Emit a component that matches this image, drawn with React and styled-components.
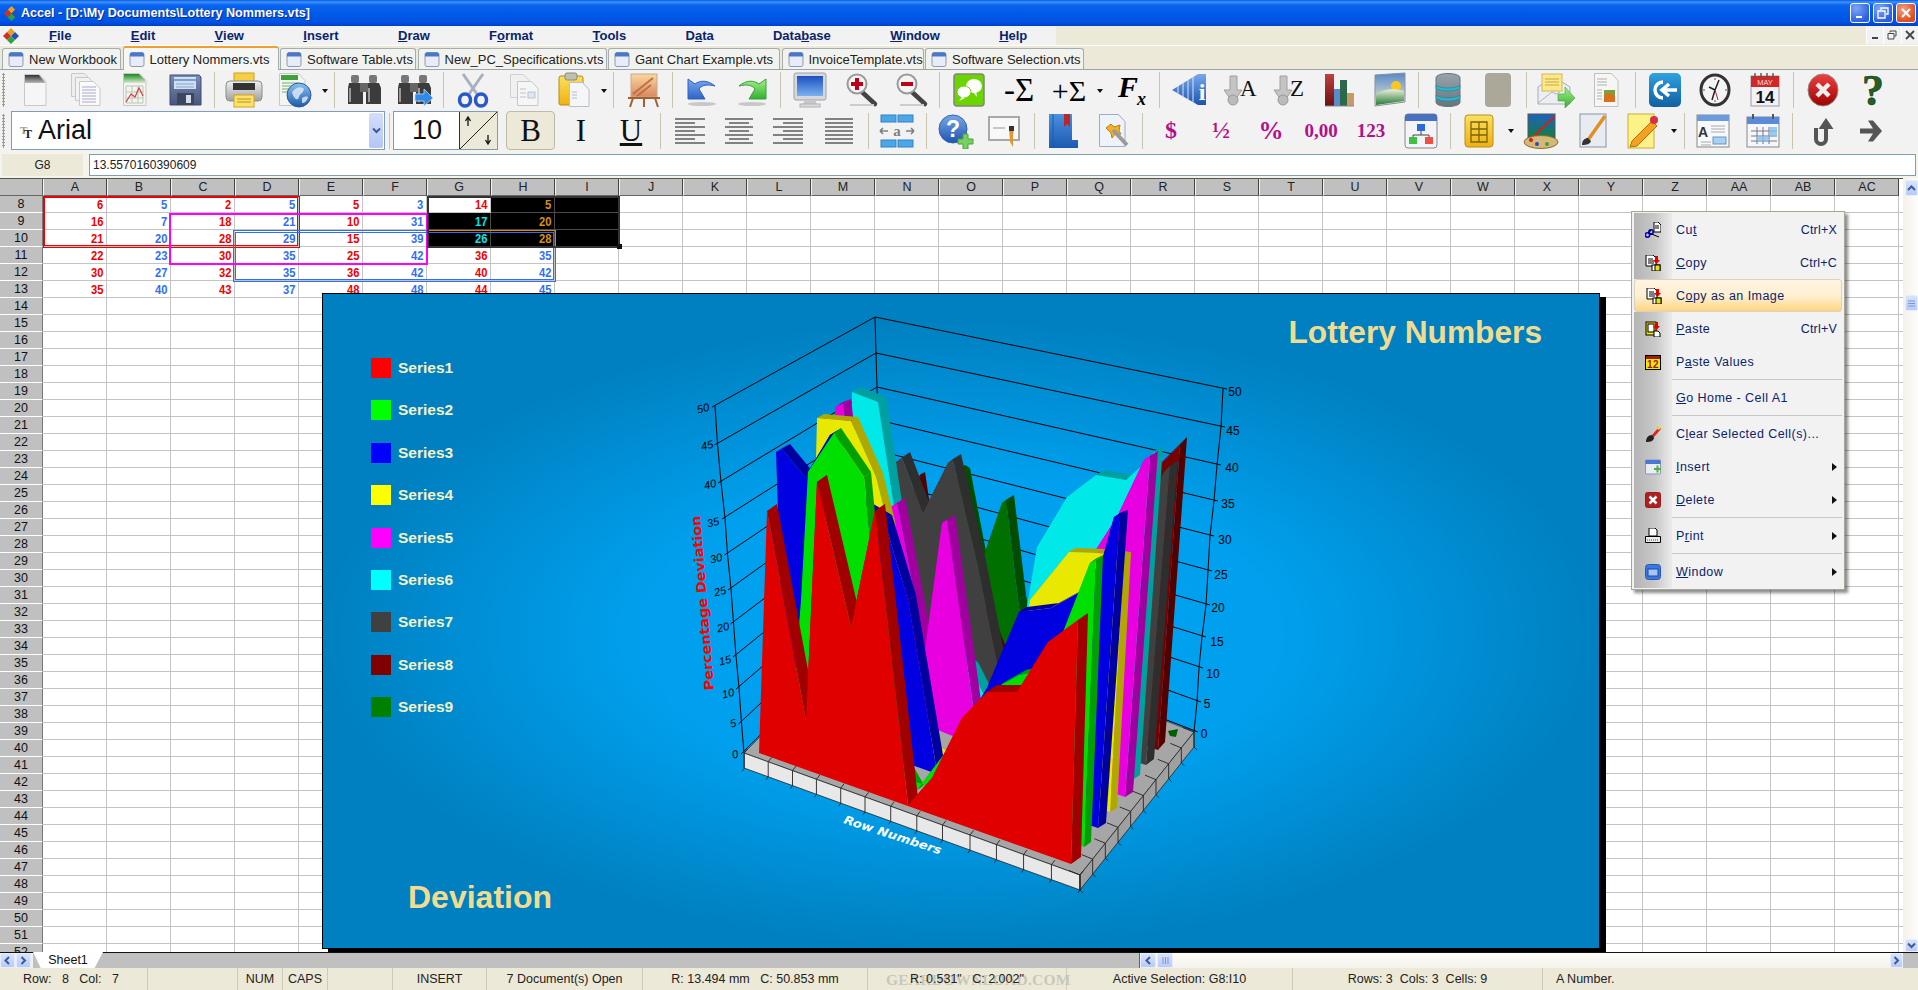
import React from 'react';
import styled, { createGlobalStyle } from 'styled-components';

const GlobalStyle = createGlobalStyle`
  html, body { margin: 0; padding: 0; overflow: hidden; background: #ece9d8; }
  body { font-family: "Liberation Sans", Arial, sans-serif; }
`;

const Win = styled.div`
  width: 1918px;
  height: 990px;
  display: flex;
  flex-direction: column;
  overflow: hidden;
`;

/* title bar */
const TitleBar = styled.div`
  height: 26px;
  flex: none;
  display: flex;
  align-items: center;
  padding: 0 2px 0 4px;
  background: linear-gradient(#0a5ae0 0, #3d95ff 2px, #0a63ee 5px, #0058e6 16px, #0152e4 22px, #003fc4 26px);
  color: #fff;
  font-size: 12.6px;
  font-weight: 700;
  text-shadow: 1px 1px 0 #0a2a90;
`;
const TitleText = styled.span`
  margin-left: 2px;
  flex: 1;
`;
const WinBtns = styled.div`
  display: flex;
  gap: 3px;
`;
const WinBtn = styled.div`
  width: 20px;
  height: 20px;
  box-sizing: border-box;
  border: 1px solid #fff;
  border-radius: 3px;
  display: flex;
  align-items: center;
  justify-content: center;
  background: ${p => (p.$close
    ? 'radial-gradient(circle at 35% 30%, #f3a184, #dd4f22 70%)'
    : 'radial-gradient(circle at 30% 25%, #7da6f8, #2a5ee0 75%)')};
`;

/* menu bar */
const MenuBar = styled.div`
  height: 20px;
  box-sizing: border-box;
  flex: none;
  display: flex;
  background: #ece9d8;
  border-bottom: 1px solid #fff;
`;
const MenuList = styled.div`
  width: 1056px;
  display: flex;
  align-items: center;
  background: #f2f2f2;
  padding-left: 3px;
  box-sizing: border-box;
`;
const MenuEntries = styled.div`
  display: flex;
  gap: 59.3px;
  margin-left: 30px;
`;
const MenuEntry = styled.span`
  font-size: 13px;
  font-weight: 700;
  color: #0a246a;
`;
const MdiBtns = styled.div`
  margin-left: auto;
  display: flex;
`;
const MdiBtn = styled.div`
  width: 16.5px;
  height: 18px;
  background: #f2f2f2;
  border-left: 1px solid #fff;
  display: flex;
  align-items: center;
  justify-content: center;
`;

/* document tabs */
const TabBar = styled.div`
  height: 24px;
  box-sizing: border-box;
  flex: none;
  display: flex;
  align-items: flex-end;
  gap: 1.5px;
  padding-left: 2px;
  background: #ece9d8;
  border-bottom: 1px solid #9aa5a8;
`;
const Tab = styled.div`
  height: ${p => (p.$active ? 23 : 21)}px;
  width: ${p => p.$w}px;
  box-sizing: border-box;
  display: flex;
  align-items: center;
  gap: 5px;
  padding-left: 5px;
  font-size: 13px;
  color: #222;
  background: ${p => (p.$active ? '#f6f6f4' : '#f2f2ee')};
  border: 1px solid #a4adb0;
  border-bottom: none;
  border-radius: 3px 3px 0 0;
  ${p => p.$active && 'border-top: 2px solid #f0a030; margin-bottom: -1px; height: 24px;'}
`;

/* toolbars */
const Toolbars = styled.div`
  flex: none;
  background: #f2f2f2;
`;
const ToolRow = styled.div`
  height: ${p => p.$h}px;
  display: flex;
  align-items: center;
`;
const Gripper = styled.div`
  width: ${p => p.$w}px;
  flex: none;
  height: 34px;
  background: radial-gradient(circle, #9a9a90 1px, transparent 1.2px) 2px 0 / 3px 3px repeat-y;
`;
const ToolBtn = styled.div`
  width: 50px;
  height: 38px;
  flex: none;
  display: flex;
  align-items: center;
  justify-content: center;
`;
const Caret = styled.div`
  width: ${p => p.$w}px;
  flex: none;
  display: flex;
  justify-content: center;
  &::after {
    content: '';
    border: 3.5px solid transparent;
    border-top: 4px solid #111;
    margin-top: 4px;
  }
`;
const Sep = styled.div`
  width: ${p => p.$w}px;
  height: 36px;
  flex: none;
  display: flex;
  justify-content: center;
  &::after {
    content: '';
    width: 1px;
    background: #c9c5ae;
  }
`;
const IconSvg = styled.svg`
  display: block;
  flex: none;
`;
const FontCombo = styled.div`
  width: 374px;
  height: 39px;
  flex: none;
  box-sizing: border-box;
  border: 1px solid #7f9db9;
  background: #fff;
  display: flex;
  align-items: center;
  padding-left: 7px;
`;
const FontName = styled.span`
  font-size: 27px;
  margin-left: 5px;
  flex: 1;
  color: #111;
`;
const ComboDrop = styled.div`
  width: 14px;
  height: 35px;
  margin-right: 1px;
  border-radius: 2px;
  background: linear-gradient(#d3defa, #b3c6f6);
  display: flex;
  align-items: center;
  justify-content: center;
`;
const SizeBox = styled.div`
  width: 105px;
  height: 39px;
  flex: none;
  box-sizing: border-box;
  border: 1px solid #7f9db9;
  background: #fff;
  display: flex;
  align-items: center;
  justify-content: space-between;
  padding-left: 18px;
  font-size: 27px;
  color: #111;
`;
const Spinner = styled.div`
  width: 37px;
  height: 37px;
  flex: none;
  border-left: 1px solid #333;
`;
const StyleBtn = styled.div`
  width: ${p => (p.$on ? 49 : 50)}px;
  height: 39px;
  flex: none;
  box-sizing: border-box;
  display: flex;
  align-items: center;
  justify-content: center;
  font-family: "Liberation Serif", serif;
  font-size: 31px;
  color: #111;
  ${p => p.$on && 'margin-left: 8px; margin-right: 1px; background: #ece9d8; border: 1px solid #bdbaa8; border-radius: 4px;'}
  ${p => p.$under && 'text-decoration: underline;'}
`;
const MagentaBtn = styled(ToolBtn)`
  font-family: "Liberation Serif", serif;
  font-weight: 700;
  font-size: ${p => p.$size}px;
  color: #b0108a;
`;

/* formula bar */
const FormulaBar = styled.div`
  height: 27px;
  flex: none;
  display: flex;
  align-items: center;
  padding: 1px 2px 0;
  box-sizing: border-box;
  gap: 6px;
  background: #f5f4ec;
`;
const CellRef = styled.div`
  width: 81px;
  height: 22px;
  background: #ece9d8;
  font-size: 12px;
  display: flex;
  align-items: center;
  justify-content: center;
  color: #222;
`;
const FormulaInput = styled.div`
  flex: 1;
  height: 22px;
  box-sizing: border-box;
  border: 1px solid #7f9db9;
  background: #fff;
  font-size: 12px;
  color: #222;
  padding-left: 3px;
  display: flex;
  align-items: center;
`;

/* sheet */
const Workspace = styled.div`
  flex: 1;
  display: flex;
  min-height: 0;
`;
const Sheet = styled.div`
  position: relative;
  flex: 1;
  overflow: hidden;
  background: #fff;
  border-top: 1px solid #555;
`;
const GridRow = styled.div`
  display: flex;
  height: ${p => p.$h}px;
`;
const Corner = styled.div`
  width: 43px;
  flex: none;
  box-sizing: border-box;
  background: #c0c0c0;
  border-right: 1px solid #666;
  border-bottom: 1px solid #666;
`;
const ColHead = styled.div`
  width: 64px;
  flex: none;
  box-sizing: border-box;
  background: #c0c0c0;
  border-right: 1px solid #444;
  border-left: 1px solid #f4f4f4;
  border-bottom: 1px solid #666;
  display: flex;
  align-items: center;
  justify-content: center;
  font-size: 12.5px;
  color: #222;
`;
const RowHead = styled.div`
  width: 43px;
  flex: none;
  box-sizing: border-box;
  background: #c0c0c0;
  border-right: 1px solid #777;
  border-bottom: 1px solid #fff;
  display: flex;
  align-items: center;
  justify-content: center;
  font-size: 12.5px;
  color: #111;
`;
const Cell = styled.div`
  width: 64px;
  flex: none;
  box-sizing: border-box;
  border-right: 1px solid ${p => (p.$sel ? '#4a4a4a' : '#c4c4c4')};
  border-bottom: 1px solid ${p => (p.$sel ? '#4a4a4a' : '#c4c4c4')};
  background: ${p => (p.$sel ? '#000' : '#fff')};
  display: flex;
  align-items: center;
  justify-content: flex-end;
  padding-right: 3px;
  font-size: 13px;
  font-weight: 700;
  color: ${p => p.$color};
`;
const CellText = styled.span`
  display: block;
  transform: scaleX(0.86);
  transform-origin: right center;
`;
const RowFill = styled.div`
  flex: 1;
  border-bottom: 1px solid #c4c4c4;
`;
const RangeBox = styled.div`
  position: absolute;
  left: ${p => p.$x}px;
  top: ${p => p.$y}px;
  width: ${p => p.$w}px;
  height: ${p => p.$h}px;
  box-sizing: border-box;
  border: ${p => p.$b || '2px solid'} ${p => p.$c};
  ${p => p.$double && `
    border-right: 3px double ${p.$c};
    border-bottom: 3px double ${p.$c};
  `}
`;
const RangeEdge = styled.div`
  position: absolute;
  left: 427px;
  top: 34px;
  width: 2px;
  height: 34px;
  background: #00d000;
`;
const FillHandle = styled.div`
  position: absolute;
  left: 617px;
  top: 65px;
  width: 5px;
  height: 5px;
  background: #111;
`;

/* embedded chart */
const ChartPanel = styled.div`
  position: absolute;
  left: 322px;
  top: 114px;
  width: 1278px;
  height: 656px;
  box-sizing: border-box;
  border: 1px solid #000;
  box-shadow: 6px 4px 0 #000;
  background: radial-gradient(ellipse closest-side at 50% 52%, #00a2f0 0, #00a0ee 50%, #0080c0 100%);
  display: grid;
  grid-template-columns: 1fr 1fr;
  grid-template-rows: auto 1fr auto;
`;
const ChartDrawing = styled.svg`
  position: absolute;
  left: -1px;
  top: -1px;
`;
const ChartTitle = styled.div`
  grid-column: 2;
  grid-row: 1;
  justify-self: end;
  padding: 20px 57px 0 0;
  font-size: 31.7px;
  font-weight: 700;
  color: #f0dc90;
`;
const ChartFoot = styled.div`
  grid-column: 1;
  grid-row: 3;
  padding: 0 0 32px 85px;
  font-size: 32px;
  font-weight: 700;
  color: #f0dc90;
`;
const Legend = styled.div`
  grid-column: 1;
  grid-row: 1 / 3;
  padding: 64px 0 0 48px;
  display: flex;
  flex-direction: column;
  gap: 22.4px;
`;
const LegendRow = styled.div`
  display: flex;
  align-items: center;
  gap: 7px;
  height: 20px;
  font-size: 15.5px;
  font-weight: 700;
  color: #f4f2c4;
`;
const Swatch = styled.div`
  width: 20px;
  height: 20px;
  background: ${p => p.$c};
`;

/* context menu */
const ContextMenu = styled.div`
  position: absolute;
  left: 1631px;
  top: 32px;
  width: 214px;
  box-sizing: border-box;
  padding: 1px 2px;
  border: 1px solid #a6a696;
  background: #f2f2f2;
  box-shadow: 3px 3px 3px rgba(0, 0, 0, 0.45);
`;
const MenuRow = styled.div`
  position: relative;
  height: 33px;
  display: flex;
  align-items: center;
  font-size: 12.5px;
  letter-spacing: 0.45px;
  color: #0a246a;
  ${p => p.$hot && `
    background: linear-gradient(#fff4e0, #fff0d4 50%, #ffd580);
    border: 1px solid #d9d2bd;
    border-radius: 3px;
    box-sizing: border-box;
  `}
`;
const MenuIconCell = styled.div`
  width: ${p => (p.$hot ? 37 : 38)}px;
  align-self: stretch;
  flex: none;
  display: flex;
  align-items: center;
  justify-content: center;
  background: ${p => (p.$hot ? 'transparent' : 'linear-gradient(90deg, #b4b4b4, #c8c8c8 55%, #ebebeb)')};
`;
const MenuLabel = styled.span`
  margin-left: 4px;
  flex: 1;
`;
const MenuKey = styled.span`
  margin-right: 5px;
  letter-spacing: 0.2px;
`;
const SubArrow = styled.span`
  margin-right: 5px;
  border: 4px solid transparent;
  border-left: 5px solid #111;
  border-right: none;
`;
const MenuDivider = styled.div`
  display: flex;
  height: 3px;
  &::before {
    content: '';
    width: 38px;
    background: linear-gradient(90deg, #b4b4b4, #c8c8c8 55%, #ebebeb);
  }
  &::after {
    content: '';
    flex: 1;
    margin-top: 1px;
    height: 1px;
    background: #c8c8c8;
  }
`;

/* scroll bars */
const VScroll = styled.div`
  width: 15px;
  flex: none;
  display: flex;
  flex-direction: column;
  align-items: flex-end;
  background: linear-gradient(90deg, #f3f1ea, #fdfdfb);
  padding-top: 2px;
`;
const ScrollBtn = styled.div`
  width: ${p => p.$w}px;
  height: ${p => p.$h}px;
  flex: none;
  box-sizing: border-box;
  border-radius: 2px;
  background: linear-gradient(#d8e3fb, #b8caf7);
  border: 1px solid #e6edfc;
  display: flex;
  align-items: center;
  justify-content: center;
  ${p => p.$t && `margin-top: ${p.$t}px;`}
  ${p => p.$auto && 'margin-top: auto;'}
  ${p => p.$end && 'margin-left: auto;'}
`;
const BottomStrip = styled.div`
  height: 16px;
  flex: none;
  display: flex;
  align-items: stretch;
  background: #c0c0c0;
  border-top: 1px solid #111;
  box-sizing: border-box;
`;
const SheetNav = styled.div`
  display: flex;
  gap: 1px;
  padding-right: 2px;
  background: #f0f0ec;
`;
const SheetTab = styled.div`
  width: 70px;
  margin-top: -1px;
  display: flex;
  align-items: center;
  justify-content: center;
  font-size: 12.5px;
  color: #111;
  background: #fff;
  clip-path: polygon(0 0, 100% 0, 88% 100%, 11% 100%);
`;
const HScroll = styled.div`
  margin-left: auto;
  width: 763px;
  display: flex;
  align-items: stretch;
  gap: 1px;
  margin-right: 15px;
  background: linear-gradient(#fdfdfb, #f4f2eb);
  border-left: 1px solid #666;
`;

/* status bar */
const StatusBar = styled.div`
  height: 22px;
  flex: none;
  display: grid;
  grid-template-columns: 148px 90px 45px 45px 65px 94px 156px 225px 199px 226px 250px 1fr;
  background: #ece9d8;
`;
const Pane = styled.div`
  position: relative;
  display: flex;
  align-items: center;
  justify-content: ${p => (p.$pad != null ? 'flex-start' : 'center')};
  padding-left: ${p => p.$pad || 0}px;
  font-size: 12.5px;
  color: #222;
  white-space: pre;
  border-right: 1px solid #cfcbb6;
  &:last-child { border-right: none; }
`;
const Watermark = styled.span`
  position: absolute;
  left: 18px;
  top: 3px;
  font-family: "Liberation Serif", serif;
  font-weight: 700;
  font-size: 15.5px;
  letter-spacing: 0.2px;
  color: #c9c7b8;
`;
const PaneText = styled.span`
  position: relative;
`;

/* icons */
const Ic = ({ children, w = 40, h = 36, vb = '0 0 40 36' }) => (
  <IconSvg width={w} height={h} viewBox={vb}>{children}</IconSvg>
);

const lines = (x, y, w, n, gap, c = '#8a8ab0') =>
  Array.from({ length: n }, (_, i) => <path key={i} d={`M${x} ${y + i * gap}h${w}`} stroke={c} strokeWidth="1" />);

const Page = ({ x = 9, y = 2, w = 22, h = 32, f = '#f6f6f6', s = '#c8c8c8' }) => (
  <path d={`M${x + 0.5} ${y + 0.5}h${w - 7}l${6.5} 7v${h - 8}h-${w - 0.5}z`} fill={f} stroke={s} />
);

const Magnifier = ({ minus }) => (
  <Ic>
    <path d="M22 20l13 12" stroke="#444" strokeWidth="4.5" strokeLinecap="round" />
    <path d="M10 33h24" stroke="#ccc" strokeWidth="2" />
    <circle cx="17" cy="12" r="9.5" fill="#f4f4f4" stroke="#9a9a9a" strokeWidth="2" />
    {minus
      ? <path d="M11 12h12" stroke="#c00018" strokeWidth="4" />
      : <path d="M11 12h12M17 6v12" stroke="#c00018" strokeWidth="4" />}
  </Ic>
);

const Binoculars = ({ go }) => (
  <Ic>
    <rect x="7" y="3" width="8" height="8" rx="2" fill="#777" />
    <rect x="25" y="3" width="8" height="8" rx="2" fill="#777" />
    <path d="M5 11h12l2 5v16h-15v-16z" fill="#3c3c3c" />
    <path d="M23 11h12l2 5v16h-15v-16z" fill="#3c3c3c" />
    <rect x="16" y="11" width="8" height="9" fill="#666" />
    <path d="M6 16v14M25 16v14" stroke="#999" strokeWidth="2" />
    {go && <path d="M21 22h9v-5l9 9-9 8v-5h-9z" fill="#2f8ae8" stroke="#bcdcf8" strokeWidth="0.8" />}
  </Ic>
);

const SortIcon = ({ letter }) => (
  <Ic>
    <path d="M11 4h7v14h5l-9 13-9-13h6z" fill="#c4c4c4" stroke="#a0a0a0" />
    <circle cx="14" cy="28" r="5" fill="#bbb" stroke="#999" />
    <text x="21" y="24" fontFamily="Liberation Serif" fontSize="23" fill="#111">{letter}</text>
  </Ic>
);

const ArrowCurve = ({ c, d, flip }) => (
  <Ic>
    <ellipse cx="20" cy="32" rx="14" ry="2" fill="#c8c8c8" />
    <g transform={flip ? 'translate(40 0) scale(-1 1)' : undefined}>
      <path d="M6 27v-20l7 5c5-4 13-4 20 2-8-2-13-1-16 3l6 10z" fill={c} stroke={d} />
    </g>
  </Ic>
);

const WindowIcon = () => (
  <Ic w={16} h={17} vb="0 0 16 17">
    <rect x="1" y="1.5" width="14" height="14" rx="2" fill="#e8ecf8" stroke="#8d9bb5" />
    <path d="M1 3.5a2 2 0 012-2h10a2 2 0 012 2v2h-14z" fill="#4a78c8" />
  </Ic>
);

const icons = {
  newDoc: (
    <Ic>
      <Page />
      <path d="M10 3h14l6 7v1h-20z" fill="url(#gDark)" />
    </Ic>
  ),
  copies: (
    <Ic>
      <Page x={6} y={1} w={20} h={24} f="#eee" />
      <Page x={10} y={5} w={20} h={24} f="#f2f2f2" />
      <Page x={14} y={9} w={21} h={25} f="#fafafa" />
      {lines(17, 15, 14, 6, 3, '#a8a8d0')}
    </Ic>
  ),
  sheet: (
    <Ic>
      <Page x={8} y={1} w={23} h={33} f="#f4f4f0" />
      <path d="M9 2h15l6 6v3h-21z" fill="url(#gGreen)" />
      <path d="M11 14h17v17h-17zM11 20h17M11 26h17M17 14v17M23 14v17" fill="none" stroke="#b8c8b8" />
      <path d="M11 30l5-8 4 3 4-9 4 8" fill="none" stroke="#d04040" strokeWidth="1.2" />
    </Ic>
  ),
  floppy: (
    <Ic>
      <path d="M5 3h29l2 2v28h-31z" fill="url(#gSlate)" stroke="#3c4c70" />
      <rect x="9" y="5" width="22" height="12" fill="#cfe0f4" />
      <path d="M9 8h22" stroke="#7aa0d0" strokeWidth="2" />
      <path d="M11 12h18M11 15h18" stroke="#8aa8cc" />
      <rect x="12" y="21" width="17" height="12" fill="#3c465c" />
      <rect x="21" y="23" width="5" height="8" fill="#d4dce8" />
    </Ic>
  ),
  printer: (
    <Ic>
      <rect x="10" y="1" width="20" height="9" fill="#f6d040" stroke="#d0a020" />
      <path d="M6 9h28a4 4 0 014 4v12a4 4 0 01-4 4h-28a4 4 0 01-4-4v-12a4 4 0 014-4z" fill="url(#gSilver)" stroke="#8c8c8c" />
      <rect x="9" y="11" width="22" height="7" fill="#333" />
      <rect x="10" y="23" width="20" height="12" fill="#fce26a" stroke="#d8a020" />
      <path d="M13 27h14M13 30h14" stroke="#b89020" />
    </Ic>
  ),
  globe: (
    <Ic>
      <Page x={5} y={1} w={26} h={33} f="#f2f6ee" />
      <path d="M7 3h17v5h-17z" fill="#40a040" />
      {lines(8, 11, 16, 4, 3, '#70b070')}
      <circle cx="25" cy="23" r="12" fill="url(#gGlobe)" stroke="#2a5a9c" />
      <path d="M18 20c4-5 9-6 12-3-1 5-4 4-5 8s-5 3-7-5zM28 26c2-1 4-2 6-1-1 4-3 6-6 6z" fill="#dbe8f6" opacity="0.85" />
    </Ic>
  ),
  binoc: <Binoculars />,
  binocGo: <Binoculars go />,
  scissors: (
    <Ic>
      <path d="M10 2l14 20M30 2l-14 20" stroke="#a8b0c0" strokeWidth="3" />
      <ellipse cx="12" cy="28" rx="5.5" ry="6" fill="none" stroke="#2858c8" strokeWidth="3.5" />
      <ellipse cx="28" cy="28" rx="5.5" ry="6" fill="none" stroke="#2858c8" strokeWidth="3.5" />
    </Ic>
  ),
  docCopy: (
    <Ic>
      <Page x={7} y={2} w={20} h={24} f="#f0f0f0" s="#d0d0d0" />
      <Page x={14} y={9} w={21} h={25} f="#f6f6f6" s="#c4c8cc" />
      {lines(17, 17, 6, 3, 4, '#b8c4d0')}
      <rect x="25" y="20" width="7" height="6" fill="#dfe6ee" stroke="#b8c4d0" />
    </Ic>
  ),
  paste: (
    <Ic>
      <rect x="6" y="4" width="24" height="29" rx="2" fill="url(#gGold)" stroke="#b08a20" />
      <rect x="12" y="1" width="12" height="7" rx="2" fill="#c0c0b0" stroke="#8c8c78" />
      <Page x={16} y={10} w={20} h={25} f="#f4f6f8" s="#b8c0c8" />
      {lines(19, 20, 5, 3, 3, '#b0bcc8')}
    </Ic>
  ),
  easel: (
    <Ic>
      <rect x="8" y="2" width="26" height="23" fill="url(#gSunset)" stroke="#c8a890" />
      <path d="M10 22l20-16M14 24l14-11" stroke="#c07040" strokeWidth="2" />
      <path d="M5 26h32M10 26l-3 9M32 26l3 9M21 26v9" stroke="#a06030" strokeWidth="2" />
    </Ic>
  ),
  undo: <ArrowCurve c="url(#gBlueBtn)" d="#3462b8" />,
  redo: <ArrowCurve c="url(#gGreenBtn)" d="#38a038" flip />,
  monitor: (
    <Ic>
      <rect x="4" y="1" width="32" height="27" rx="2" fill="#d8d8dc" stroke="#a0a0a8" />
      <rect x="7" y="4" width="26" height="20" fill="url(#gScreen)" />
      <path d="M15 28h10l2 4h-14z" fill="#c8c8cc" />
      <rect x="10" y="32" width="20" height="3" fill="#dcdce0" stroke="#b0b0b4" />
    </Ic>
  ),
  zoomIn: <Magnifier />,
  zoomOut: <Magnifier minus />,
  chat: (
    <Ic>
      <rect x="5" y="2" width="30" height="32" rx="3" fill="#6cd400" stroke="#808878" strokeWidth="1.5" />
      <ellipse cx="25" cy="14" rx="8" ry="7" fill="#fff" />
      <path d="M24 20l4 5-1-6z" fill="#fff" />
      <ellipse cx="15" cy="20" rx="7" ry="6" fill="#fff" stroke="#6cd400" />
      <path d="M13 25l-3 4 6-3z" fill="#fff" />
    </Ic>
  ),
  sumMinus: (
    <Ic>
      <text x="20" y="29" textAnchor="middle" fontFamily="Liberation Serif" fontSize="33" fill="#000">-Σ</text>
    </Ic>
  ),
  sumPlus: (
    <Ic>
      <text x="20" y="29" textAnchor="middle" fontFamily="Liberation Serif" fontSize="30" fill="#000">+Σ</text>
    </Ic>
  ),
  fx: (
    <Ic>
      <text x="7" y="25" fontFamily="Liberation Serif" fontWeight="700" fontStyle="italic" fontSize="30" fill="#000">F</text>
      <text x="26" y="33" fontFamily="Liberation Serif" fontWeight="700" fontStyle="italic" fontSize="18" fill="#000">x</text>
    </Ic>
  ),
  info: (
    <Ic>
      <path d="M3 18l26-16h8v31h-8z" fill="url(#gInfo)" />
      <path d="M9 14v9M14 11v15M19 8v21M24 5v27" stroke="#d4e4f8" strokeWidth="1" />
      <text x="33" y="28" textAnchor="middle" fontFamily="Liberation Serif" fontWeight="700" fontSize="24" fill="#fff">i</text>
    </Ic>
  ),
  sortA: <SortIcon letter="A" />,
  sortZ: <SortIcon letter="Z" />,
  bars: (
    <Ic>
      <rect x="6" y="2" width="9" height="32" fill="url(#gMaroon)" />
      <rect x="15" y="17" width="6" height="17" fill="#5a8ccc" />
      <rect x="21" y="8" width="7" height="26" fill="#2a6a4a" />
      <rect x="28" y="21" width="7" height="13" fill="#c89a68" />
      <path d="M6 34h29" stroke="#888" />
    </Ic>
  ),
  landscape: (
    <Ic>
      <path d="M6 3l30-2v29l-30 4z" fill="url(#gSky)" stroke="#88909c" />
      <circle cx="27" cy="14" r="5" fill="#f8c820" />
      <path d="M7 22c8-5 18-6 28-3v10l-28 4z" fill="url(#gGrass)" />
    </Ic>
  ),
  db: (
    <Ic>
      <path d="M8 6c0-6 24-6 24 0v24c0 6-24 6-24 0z" fill="url(#gDb)" stroke="#68747c" />
      <path d="M8 13c3 4 21 4 24 0v3c-3 4-21 4-24 0zM8 23c3 4 21 4 24 0v3c-3 4-21 4-24 0z" fill="#28b8d0" stroke="#1a788c" strokeWidth="0.5" />
    </Ic>
  ),
  blank: (
    <Ic>
      <rect x="7" y="1" width="26" height="34" rx="4" fill="#aba89a" />
    </Ic>
  ),
  mail: (
    <Ic>
      <path d="M2 15l16-10 16 10v17h-32z" fill="#eceef2" stroke="#a8acb4" />
      <rect x="6" y="2" width="20" height="17" fill="#fce88c" stroke="#d4b850" />
      {lines(9, 7, 14, 3, 3, '#c8a840')}
      <path d="M2 31l14-11 4 2 4-2" fill="none" stroke="#b0b4bc" />
      <path d="M22 22h7v-7l10 11-10 10v-7h-7z" fill="url(#gGreenBtn)" stroke="#40a040" strokeWidth="0.6" />
    </Ic>
  ),
  docPic: (
    <Ic>
      <Page x={8} y={1} w={24} h={34} f="#f6f6f4" s="#c0c0c0" />
      {lines(11, 7, 10, 3, 3, '#b0b0b0')}
      <rect x="18" y="18" width="11" height="12" fill="#7aa040" />
      <path d="M18 24c3-4 6-3 11 0v6h-11z" fill="#d87020" />
      {lines(11, 18, 5, 4, 3, '#b0b0b0')}
    </Ic>
  ),
  blueC: (
    <Ic>
      <rect x="4" y="1" width="32" height="34" rx="5" fill="url(#gCBlue)" />
      <path d="M18 10a8 8 0 100 16" fill="none" stroke="#fff" strokeWidth="3.5" />
      <path d="M18 18h14M24 12l-7 6 7 6" fill="none" stroke="#fff" strokeWidth="3.5" />
    </Ic>
  ),
  clock: (
    <Ic>
      <ellipse cx="20" cy="18" rx="14" ry="15" fill="#f4f4f4" stroke="#333" strokeWidth="3" />
      <path d="M20 18l4-10M20 18l-3 10M20 18l-6-3" stroke="#222" strokeWidth="1.5" />
      <path d="M20 18l3 10" stroke="#c02020" strokeWidth="1" />
      <path d="M20 6v2M20 28v2M8 18h2M30 18h2" stroke="#555" />
    </Ic>
  ),
  calendar: (
    <Ic>
      <rect x="6" y="4" width="28" height="30" fill="#f2f2f6" stroke="#9a9aa4" />
      <rect x="6" y="4" width="28" height="11" fill="#d02828" />
      <path d="M10 1v5M16 1v5M22 1v5M28 1v5" stroke="#555" strokeWidth="1.4" />
      <text x="20" y="13" textAnchor="middle" fontSize="7.5" fill="#f4dcdc">MAY</text>
      <text x="20" y="31" textAnchor="middle" fontSize="17" fontWeight="700" fill="#111">14</text>
    </Ic>
  ),
  redX: (
    <Ic>
      <ellipse cx="20" cy="18" rx="15" ry="16" fill="url(#gRed)" stroke="#888" />
      <path d="M14 12l12 12M26 12l-12 12" stroke="#eee" strokeWidth="4.5" />
    </Ic>
  ),
  help: (
    <Ic>
      <text x="20" y="33" textAnchor="middle" fontFamily="Liberation Serif" fontWeight="700" fontSize="44" fill="#246024" stroke="#143c14" strokeWidth="0.7">?</text>
    </Ic>
  ),
  alignL: <Ic>{[0, 1, 2, 3, 4, 5, 6].map(i => <path key={i} d={`M6 ${6 + i * 4}h${i % 2 ? 20 : 30}`} stroke="#111" />)}</Ic>,
  alignC: <Ic>{[0, 1, 2, 3, 4, 5, 6].map(i => <path key={i} d={i % 2 ? `M10 ${6 + i * 4}h20` : `M6 ${6 + i * 4}h28`} stroke="#111" />)}</Ic>,
  alignR: <Ic>{[0, 1, 2, 3, 4, 5, 6].map(i => <path key={i} d={i % 2 ? `M14 ${6 + i * 4}h20` : `M4 ${6 + i * 4}h30`} stroke="#111" />)}</Ic>,
  alignJ: <Ic>{[0, 1, 2, 3, 4, 5, 6].map(i => <path key={i} d={`M6 ${6 + i * 4}h28`} stroke="#111" />)}</Ic>,
  merge: (
    <Ic>
      <rect x="4" y="2" width="15" height="7" fill="#4aa8e8" stroke="#3880c0" />
      <rect x="21" y="2" width="15" height="7" fill="#4aa8e8" stroke="#3880c0" />
      <rect x="4" y="27" width="15" height="7" fill="#4aa8e8" stroke="#3880c0" />
      <rect x="21" y="27" width="15" height="7" fill="#4aa8e8" stroke="#3880c0" />
      <text x="20" y="23" textAnchor="middle" fontFamily="Liberation Serif" fontWeight="700" fontSize="15" fill="#808080">a</text>
      <path d="M3 18h8M3 18l3-3M3 18l3 3M37 18h-8M37 18l-3-3M37 18l-3 3" stroke="#808080" strokeWidth="1.6" fill="none" />
    </Ic>
  ),
  helpPlus: (
    <Ic>
      <circle cx="18" cy="16" r="14" fill="url(#gInfo)" stroke="#3860b0" />
      <text x="18" y="24" textAnchor="middle" fontWeight="700" fontSize="23" fill="#fff">?</text>
      <path d="M28 21h5v5h5v5h-5v5h-5v-5h-5v-5h5z" fill="#78d060" stroke="#50a040" />
    </Ic>
  ),
  noteEdit: (
    <Ic>
      <rect x="4" y="4" width="30" height="23" fill="#f8f8f8" stroke="#a8a8a8" strokeWidth="2" />
      <path d="M8 15h12" stroke="#c8c8c8" strokeWidth="2" />
      <path d="M24 15l5 1-1 6 0 12-3-5z" fill="#e09830" />
      <rect x="24" y="13" width="5" height="5" fill="#333" />
    </Ic>
  ),
  book: (
    <Ic>
      <path d="M6 1h23v26h6v8h-29z" fill="url(#gBook)" />
      <path d="M21 1h6v13l-3-3-3 3z" fill="#b82828" />
      <path d="M10 1v34" stroke="#1c5aa8" />
    </Ic>
  ),
  wand: (
    <Ic>
      <Page x={6} y={1} w={26} h={33} f="#eef2fa" s="#a0acc0" />
      <path d="M13 15l5-4 3 3 6-2-1 6 2 3-6 0-3 4-1-5z" fill="#f4b020" stroke="#c08010" />
      <path d="M20 17l14 15" stroke="#9a9a9a" strokeWidth="4" />
    </Ic>
  ),
  org: (
    <Ic>
      <rect x="4" y="1" width="32" height="34" rx="3" fill="#f2f4f8" stroke="#888" />
      <path d="M4 4a3 3 0 013-3h26a3 3 0 013 3v4h-32z" fill="#4a70c0" />
      <rect x="16" y="11" width="8" height="7" fill="#2a6ae0" />
      <path d="M20 18v4M12 24v-2h16v2" stroke="#444" fill="none" />
      <rect x="8" y="24" width="8" height="7" fill="#40c040" />
      <rect x="24" y="24" width="8" height="7" fill="#f05040" />
    </Ic>
  ),
  grid: (
    <Ic>
      <rect x="6" y="2" width="28" height="32" rx="3" fill="url(#gGold)" stroke="#b89018" />
      <path d="M12 9h16v20h-16zM12 16h16M12 22h16M20 9v20" fill="none" stroke="#7a6408" strokeWidth="1.3" />
    </Ic>
  ),
  palette: (
    <Ic>
      <rect x="6" y="1" width="27" height="24" fill="url(#gScreenG)" stroke="#555" />
      <path d="M12 23l20-19" stroke="#d02020" strokeWidth="2" />
      <ellipse cx="19" cy="29" rx="17" ry="6.5" fill="#d8b878" stroke="#8a6a30" />
      <circle cx="9" cy="27" r="2" fill="#d02020" />
      <circle cx="15" cy="31" r="2" fill="#2050c0" />
      <circle cx="25" cy="31" r="2" fill="#40a040" />
    </Ic>
  ),
  brush: (
    <Ic>
      <rect x="8" y="1" width="26" height="33" fill="#e8ecf2" stroke="#8c94a0" />
      <path d="M16 27l17-24" stroke="#e09020" strokeWidth="3.5" />
      <path d="M10 32c0-5 3-7 6-7l3 3c-1 3-4 4-9 4z" fill="#333" />
    </Ic>
  ),
  pencilNote: (
    <Ic>
      <rect x="6" y="1" width="26" height="34" fill="#fcf288" stroke="#c8b030" />
      <path d="M10 28l20-20 5 5-20 20-7 1z" fill="#f4a020" stroke="#b07010" />
      <circle cx="32" cy="7" r="4" fill="#d83040" />
    </Ic>
  ),
  aDoc: (
    <Ic>
      <rect x="4" y="2" width="32" height="32" fill="#f6f8fc" stroke="#888" />
      <rect x="4" y="2" width="32" height="6" fill="#6a9ae0" />
      <text x="10" y="24" textAnchor="middle" fontWeight="700" fontSize="14" fill="#333">A</text>
      {lines(18, 13, 14, 3, 3, '#aaa')}
      {lines(8, 29, 10, 2, 3, '#aaa')}
      <rect x="20" y="24" width="13" height="7" fill="#a8d0f0" stroke="#6a98c0" />
    </Ic>
  ),
  calTable: (
    <Ic>
      <rect x="4" y="4" width="32" height="30" fill="#f4f6fa" stroke="#888" />
      <rect x="4" y="4" width="32" height="7" fill="#5a8ad8" />
      <path d="M10 1v5M30 1v5" stroke="#555" strokeWidth="2" />
      <path d="M8 18h26M8 23h26M8 28h26M14 14v17M20 14v17M26 14v17" stroke="#778" />
      <rect x="26" y="14" width="8" height="9" fill="#80c0f0" opacity="0.8" />
      <rect x="14" y="23" width="12" height="5" fill="#80c0f0" opacity="0.8" />
    </Ic>
  ),
  turnUp: (
    <Ic>
      <path d="M15 15v11a5 5 0 0010 0v-11" fill="none" stroke="#555" strokeWidth="4" />
      <path d="M25 5l7.500 11h-15z" fill="#555" />
    </Ic>
  ),
  goRight: (
    <Ic>
      <path d="M9 15.500h13l-5-8h5l9 10.500-9 10.500h-5l5-8h-13z" fill="#555" />
    </Ic>
  ),
};

/* small menu icons */
const Mini = ({ children }) => <IconSvg width="16" height="16" viewBox="0 0 16 16">{children}</IconSvg>;
const CopyGlyph = () => (
  <Mini>
    <path d="M1 0h7l3 3v8h-10z" fill="#fff" stroke="#000" />
    <path d="M3 4h5M3 6h6M3 8h6" stroke="#000" />
    <path d="M10 1h3v4h2l-3.5 4-3.5-4h2z" fill="#e00000" />
    <rect x="7" y="10" width="8" height="6" fill="#fff" stroke="#000" />
    <rect x="10" y="10" width="5" height="6" fill="#f0e000" stroke="#000" />
  </Mini>
);
const miniIcons = {
  cut: (
    <Mini>
      <path d="M9 0h4l3 3v7h-7z" fill="#fff" stroke="#000" />
      <path d="M10 4h4M10 6h4" stroke="#000" />
      <circle cx="2.5" cy="13" r="2.2" fill="none" stroke="#0000d0" strokeWidth="1.6" />
      <circle cx="6" cy="10" r="2.2" fill="none" stroke="#0000d0" strokeWidth="1.6" />
      <path d="M4 11l10 4M6 7l-2 5" stroke="#000" />
    </Mini>
  ),
  copy: <CopyGlyph />,
  paste: (
    <Mini>
      <rect x="1" y="1" width="10" height="13" fill="#f4e800" stroke="#000" />
      <rect x="3" y="3" width="6" height="8" fill="#fff" stroke="#000" />
      <path d="M10 1h3v4h2l-3.5 4-3.5-4h2z" fill="#e00000" />
      <path d="M9 10h4l2 2v4h-6z" fill="#fff" stroke="#000" />
    </Mini>
  ),
  values: (
    <Mini>
      <rect x="0.5" y="1.5" width="15" height="14" fill="#f4e800" stroke="#000" />
      <rect x="1" y="2" width="14" height="3" fill="#a01818" />
      <text x="8" y="14" textAnchor="middle" fontSize="10" fontWeight="700" fill="#a01818">12</text>
    </Mini>
  ),
  clear: (
    <Mini>
      <path d="M7 9l7-8 2 2-7 8z" fill="#e02020" />
      <path d="M12 3l3-3 1 1-2 3z" fill="#f4e800" />
      <path d="M1 16c0-4 2-7 6-7l2 2c0 4-3 5-8 5z" fill="#222" />
    </Mini>
  ),
  insert: (
    <Mini>
      <rect x="0.5" y="1" width="15" height="14" rx="1" fill="#e8ecf4" stroke="#8898b0" />
      <rect x="0.5" y="1" width="15" height="4" fill="#4a78d0" />
      <path d="M9 9h2.5v-2.5h2v2.500h2.500v2h-2.500v2.500h-2v-2.500h-2.500z" fill="#50b040" />
    </Mini>
  ),
  del: (
    <Mini>
      <rect x="0.5" y="0.5" width="15" height="15" rx="2" fill="#b02020" stroke="#902020" />
      <path d="M4.500 4.500l7 7M11.500 4.500l-7 7" stroke="#fff" strokeWidth="2.500" />
    </Mini>
  ),
  print: (
    <Mini>
      <path d="M4 0h6l2 2v6h-8z" fill="#fff" stroke="#000" />
      <path d="M0.500 8.500h15v6h-15z" fill="#eee" stroke="#000" />
      <path d="M2 12h12" stroke="#999" strokeDasharray="1 1" strokeWidth="2" />
    </Mini>
  ),
  win: (
    <Mini>
      <rect x="0.500" y="0.500" width="15" height="15" rx="3" fill="#3878e0" stroke="#2858b0" />
      <rect x="3" y="5" width="10" height="7" fill="#a8c4f4" stroke="#1c48a0" />
    </Mini>
  ),
};

const toolsOne = ['newDoc', 'copies', 'sheet', 'floppy', '|', 'printer', 'globe', 'v', '|', 'binoc', 'binocGo', '|',
  'scissors', 'docCopy', 'paste', 'v', '|', 'easel', '|', 'undo', 'redo', '|', 'monitor', 'zoomIn', 'zoomOut', '|',
  'chat', 'sumMinus', 'sumPlus', 'v', 'fx', '|', 'info', 'sortA', 'sortZ', 'bars', 'landscape', '|', 'db', 'blank', '|',
  'mail', 'docPic', '|', 'blueC', 'clock', 'calendar', '|', 'redX', 'help'];

const toolsTwo = ['|', 'alignL', 'alignC', 'alignR', 'alignJ', '|', 'merge', '|', 'helpPlus', 'noteEdit', '|', 'book', 'wand', '|',
  '$$:24:$', '$$:24:½', '$$:25:%', '$$:19:0,00', '$$:19:123', 'org', '|', 'grid', 'v', 'palette', 'brush', 'pencilNote', 'v', '|',
  'aDoc', 'calTable', '|', 'turnUp', 'goRight'];

const renderTools = (list, sepW, caretW) => list.map((name, i) => {
  if (name === '|') return <Sep key={i} $w={sepW} />;
  if (name === 'v') return <Caret key={i} $w={caretW} />;
  if (name.startsWith('$$')) {
    const [, size, label] = name.split(':');
    return <MagentaBtn key={i} $size={size}>{label}</MagentaBtn>;
  }
  return <ToolBtn key={i}>{icons[name]}</ToolBtn>;
});

/* spreadsheet data */
const columns = 'A B C D E F G H I J K L M N O P Q R S T U V W X Y Z AA AB AC'.split(' ');
const values = [
  [6, 5, 2, 5, 5, 3, 14, 5],
  [16, 7, 18, 21, 10, 31, 17, 20],
  [21, 20, 28, 29, 15, 39, 26, 28],
  [22, 23, 30, 35, 25, 42, 36, 35],
  [30, 27, 32, 35, 36, 42, 40, 42],
  [35, 40, 43, 37, 48, 48, 44, 45],
];
const rowNumbers = Array.from({ length: 45 }, (_, i) => i + 8);

const cellColor = (c, sel) => {
  if (c % 2 === 0) return sel ? '#00e8f0' : '#f00000';
  return sel ? '#d89010' : '#3070f0';
};

/* 3d chart, page coordinates */
const leftAxis = [[744, 753], [741.5, 723], [739, 688], [736, 656], [733.5, 623], [731, 589], [727.5, 554], [725, 518], [721, 482], [717.5, 444], [715, 406]];
const rightAxis = [[1194, 732], [1197, 702], [1199, 668], [1202, 637], [1206, 605], [1208, 571], [1210, 536], [1214, 501], [1217, 465], [1221, 427], [1223, 389]];
const backAxis = [[885, 612], [884, 588], [883, 563], [882, 537], [881, 510], [880, 481], [879, 451], [878, 420], [877, 387], [876, 353], [875, 317]];
const leftLabels = [[736, 758], [734, 727], [729, 697], [726, 664], [724, 631], [721, 595], [717, 562], [714, 526], [711, 488], [708, 449], [704, 412]];
const rightLabels = [[1204, 734], [1207, 704], [1213, 674], [1217, 642], [1218, 608], [1221, 575], [1225, 540], [1228, 504], [1232, 468], [1233, 431], [1235, 392]];

const frontTicks = [180, 247, 315, 382, 450, 518, 590, 663, 735, 812, 886, 962, 1040, 1120].map(z => 680 + z / 2.8);

const series = [
  { c: '#007000', d: '#004c00', e: [8, -5], top: [[957, 470], [962, 473], [980, 567], [1002, 503], [1006, 500], [1018, 600], [1032, 670]], base: [[1040, 690], [945, 650]] },
  { c: '#780000', d: '#520000', e: [7, -8], top: [[914, 482], [918, 480], [930, 560], [960, 600], [985, 620], [1003, 665], [1040, 640], [1100, 560], [1155, 470], [1180, 445]], base: [[1158, 750], [1000, 700], [905, 620]] },
  { c: '#404040', d: '#2e2e2e', e: [8, -6], top: [[896, 462], [902, 458], [923, 513], [948, 463], [953, 460], [978, 567], [998, 667], [1010, 690], [1100, 600], [1150, 500], [1164, 472], [1170, 466]], base: [[1146, 765], [1000, 720], [915, 640]] },
  { c: '#00e8e8', d: '#00a0a0', e: [8, -5], top: [[852, 392], [878, 402], [894, 507], [915, 640], [970, 667], [990, 707], [1010, 710], [1028, 600], [1037, 547], [1067, 497], [1096, 475], [1126, 480], [1148, 460], [1155, 451]], base: [[1132, 780], [950, 710], [850, 680]] },
  { c: '#e800e0', d: '#a000a0', e: [8, -5], top: [[835, 407], [843, 404], [865, 590], [891, 507], [897, 503], [925, 650], [942, 523], [947, 520], [975, 720], [985, 722], [1117, 517], [1144, 460], [1150, 456]], base: [[1125, 797], [950, 735], [840, 690]] },
  { c: '#e8e800', d: '#b0a800', e: [7, -4], top: [[817, 418], [851, 421], [876, 477], [888, 525], [900, 620], [920, 760], [1000, 770], [1030, 600], [1069, 552], [1098, 553], [1124, 556]], base: [[1110, 812], [1000, 770], [810, 700]] },
  { c: '#0000e0', d: '#0000a0', e: [8, -5], top: [[776, 452], [782, 449], [805, 477], [830, 435], [850, 500], [884, 520], [908, 600], [937, 772], [987, 688], [1019, 612], [1051, 608], [1082, 591], [1103, 557], [1114, 517], [1120, 515]], base: [[1098, 828], [940, 775], [785, 720]] },
  { c: '#00e000', d: '#00a000', e: [7, -5], top: [[808, 472], [834, 433], [864, 477], [872, 560], [900, 760], [917, 790], [985, 700], [1001, 685], [1019, 675], [1028, 673], [1060, 640], [1090, 563], [1096, 560]], base: [[1084, 847], [1000, 810], [790, 740], [801, 600]] },
  { c: '#e00000', d: '#a00000', e: [10, -7], top: [[767, 511], [806, 720], [817, 482], [851, 627], [875, 511], [908, 805], [932, 778], [962, 718], [987, 692], [1017, 692], [1048, 642], [1078, 620]], base: [[1071, 864], [759, 753]] },
];

const pts = list => list.map(p => p.join(',')).join(' ');

const Slice = ({ c, d, e, top, base }) => {
  const chain = [...top, base[0]];
  return (
    <g>
      {chain.slice(0, -1).map((p, i) => {
        const q = chain[i + 1];
        return <polygon key={i} points={pts([p, q, [q[0] + e[0], q[1] + e[1]], [p[0] + e[0], p[1] + e[1]]])} fill={d} />;
      })}
      <polygon points={pts([...top, ...base])} fill={c} />
    </g>
  );
};

const lerp = (a, b, t) => a + (b - a) * t;

const Chart3D = () => (
  <ChartDrawing width="1278" height="656" viewBox="322 293 1278 656">
    {leftAxis.map((p, i) => <line key={i} x1={p[0] - 3} y1={p[1] + 1} x2={backAxis[i][0]} y2={backAxis[i][1]} stroke="#000" strokeWidth="1" />)}
    {rightAxis.map((p, i) => <line key={i} x1={p[0] + 4} y1={p[1]} x2={backAxis[i][0]} y2={backAxis[i][1]} stroke="#000" strokeWidth="1" />)}
    <polyline points={pts(leftAxis)} fill="none" stroke="#000" />
    <polyline points={pts(rightAxis)} fill="none" stroke="#000" />
    <polyline points={pts(backAxis)} fill="none" stroke="#000" />

    <polygon points="744,753 885,612 1194,732 1080,875" fill="#a6a6a6" stroke="#333" strokeWidth="0.6" />
    <polygon points="744,753 1080,875 1080,890 744,768" fill="#e8e8e8" stroke="#222" strokeWidth="0.8" />
    <polygon points="1080,875 1194,732 1194,747 1080,890" fill="#a0a0a0" stroke="#222" strokeWidth="0.8" />
    {frontTicks.map((x, i) => {
      const t = (x - 744) / 336;
      const y = lerp(753, 875, t);
      return <path key={i} d={`M${x} ${y}v15M${x} ${y}l${3.5} -4.5M${x} ${y + 15}l-2 3`} stroke="#222" strokeWidth="0.9" fill="none" />;
    })}
    {Array.from({ length: 10 }, (_, i) => {
      const t = i / 9;
      const x = lerp(1080, 1194, t);
      const y = lerp(875, 732, t);
      return <path key={i} d={`M${x} ${y}v15M${x} ${y}l-11 -4.5M${x} ${y + 15}l3 3`} stroke="#222" strokeWidth="0.9" fill="none" />;
    })}

    {series.map((s, i) => <Slice key={i} {...s} />)}
    <polygon points="1168,731 1178,729 1176,737 1170,736" fill="#006000" />

    {leftLabels.map((p, i) => (
      <text key={i} x={p[0]} y={p[1]} textAnchor="middle" fontSize="11" fontStyle="italic" fill="#000" transform={`rotate(-14 ${p[0]} ${p[1]})`}>{i * 5}</text>
    ))}
    {rightLabels.map((p, i) => (
      <text key={i} x={p[0]} y={p[1] + 4} textAnchor="middle" fontSize="12" fill="#000">{i * 5}</text>
    ))}
    <text transform="translate(714 690) rotate(-94.500)" fontFamily="DejaVu Sans" fontWeight="700" fontSize="13" fill="#ff0000" textLength="175" lengthAdjust="spacingAndGlyphs">Percentage Deviation</text>
    <text transform="translate(843 823) rotate(18)" fontFamily="DejaVu Sans" fontWeight="700" fontStyle="italic" fontSize="11.500" fill="#fff" textLength="102" lengthAdjust="spacingAndGlyphs">Row Numbers</text>
  </ChartDrawing>
);

const legend = [
  ['Series1', '#ff0000'], ['Series2', '#00ff00'], ['Series3', '#0000ff'], ['Series4', '#ffff00'], ['Series5', '#ff00ff'],
  ['Series6', '#00ffff'], ['Series7', '#404040'], ['Series8', '#800000'], ['Series9', '#008000'],
];

const menuRows = [
  { icon: 'cut', label: <>Cu<u>t</u></>, key: 'Ctrl+X' },
  { icon: 'copy', label: <><u>C</u>opy</>, key: 'Ctrl+C' },
  { icon: 'copy', label: <>C<u>o</u>py as an Image</>, hot: true },
  { icon: 'paste', label: <><u>P</u>aste</>, key: 'Ctrl+V' },
  { icon: 'values', label: <>P<u>a</u>ste Values</> },
  { divider: true },
  { label: <><u>G</u>o Home - Cell A1</> },
  { divider: true },
  { icon: 'clear', label: <>C<u>l</u>ear Selected Cell(s)...</> },
  { icon: 'insert', label: <><u>I</u>nsert</>, sub: true },
  { icon: 'del', label: <><u>D</u>elete</>, sub: true },
  { divider: true },
  { icon: 'print', label: <>P<u>r</u>int</>, sub: true },
  { divider: true },
  { icon: 'win', label: <><u>W</u>indow</>, sub: true },
];

const tabs = [
  ['New Workbook', 119], ['Lottery Nommers.vts', 156, true], ['Software Table.vts', 136], ['New_PC_Specifications.vts', 189],
  ['Gant Chart Example.vts', 172], ['InvoiceTemplate.vts', 142], ['Software Selection.vts', 159],
];

const menus = [
  [<u key="u">F</u>, 'ile'], [<u key="u">E</u>, 'dit'], [<u key="u">V</u>, 'iew'], [<u key="u">I</u>, 'nsert'], [<u key="u">D</u>, 'raw'],
  ['F', <u key="u">o</u>, 'rmat'], [<u key="u">T</u>, 'ools'], ['D', <u key="u">a</u>, 'ta'], ['Data', <u key="u">b</u>, 'ase'],
  [<u key="u">W</u>, 'indow'], [<u key="u">H</u>, 'elp'],
];

const AppLogo = ({ size }) => (
  <IconSvg width={size} height={size} viewBox="0 0 16 16">
    <path d="M8 0l4 4-4 4-4-4z" fill="#e8a020" />
    <path d="M4 4l4 4-4 4-4-4z" fill="#d03020" />
    <path d="M12 4l4 4-4 4-4-4z" fill="#2050c0" />
    <path d="M8 8l4 4-4 4-4-4z" fill="#30a040" />
  </IconSvg>
);

const ScrollChevron = ({ dir }) => {
  const d = { up: 'M2 7l3.500-3.500 3.500 3.500', down: 'M2 3.500l3.500 3.500 3.500-3.500', left: 'M7 2l-3.500 3.500 3.500 3.500', right: 'M3.500 2l3.500 3.500-3.500 3.500' }[dir];
  return (
    <IconSvg width="11" height="11" viewBox="0 0 11 11">
      <path d={d} fill="none" stroke="#3a5a98" strokeWidth="2" />
    </IconSvg>
  );
};

export default function App() {
  return (
    <Win>
      <GlobalStyle />
      <svg width="0" height="0" style={{ position: 'absolute' }}>
        <defs>
          {[
            ['gDark', '#333', '#b8b8b8'], ['gGreen', '#1a8a1a', '#d8e8d0'], ['gSlate', '#7a8cb4', '#46567c'], ['gSilver', '#f0f0f0', '#a0a0a0'],
            ['gGlobe', '#8cc0f0', '#1c5cac'], ['gGold', '#fbe060', '#f0b010'], ['gSunset', '#f8d8a0', '#d88860'], ['gBlueBtn', '#7aa8f0', '#2c64c8'],
            ['gGreenBtn', '#a8f088', '#30b030'], ['gScreen', '#1c50c0', '#7ab0f0'], ['gInfo', '#7aa8e8', '#1c54b0'], ['gMaroon', '#c04040', '#6a1010'],
            ['gSky', '#5888c8', '#f4f0d0'], ['gGrass', '#e8f0d8', '#2a7a3a'], ['gDb', '#98a4ac', '#68747c'], ['gCBlue', '#30a0e0', '#1060a0'],
            ['gRed', '#f04040', '#a00000'], ['gBook', '#4a90e0', '#1c5ab0'], ['gScreenG', '#2060c0', '#108040'],
          ].map(([id, a, b]) => (
            <linearGradient key={id} id={id} x1="0" y1="0" x2="0" y2="1">
              <stop offset="0" stopColor={a} />
              <stop offset="1" stopColor={b} />
            </linearGradient>
          ))}
        </defs>
      </svg>

      <TitleBar>
        <AppLogo size={15} />
        <TitleText>Accel - [D:\My Documents\Lottery Nommers.vts]</TitleText>
        <WinBtns>
          <WinBtn>
            <IconSvg width="12" height="12" viewBox="0 0 12 12"><path d="M2 9h6v2h-6z" fill="#fff" /></IconSvg>
          </WinBtn>
          <WinBtn>
            <IconSvg width="12" height="12" viewBox="0 0 12 12"><path d="M4 3V1h7v6H9M1 4h7v7H1z" fill="none" stroke="#fff" strokeWidth="1.300" /></IconSvg>
          </WinBtn>
          <WinBtn $close>
            <IconSvg width="12" height="12" viewBox="0 0 12 12"><path d="M2 2l8 8M10 2l-8 8" stroke="#fff" strokeWidth="2" /></IconSvg>
          </WinBtn>
        </WinBtns>
      </TitleBar>

      <MenuBar>
        <MenuList>
          <AppLogo size={16} />
          <MenuEntries>
            {menus.map((m, i) => <MenuEntry key={i}>{m}</MenuEntry>)}
          </MenuEntries>
        </MenuList>
        <MdiBtns>
          <MdiBtn><IconSvg width="10" height="10" viewBox="0 0 10 10"><path d="M2 8h6" stroke="#444" strokeWidth="2" /></IconSvg></MdiBtn>
          <MdiBtn><IconSvg width="10" height="10" viewBox="0 0 10 10"><path d="M3 2.500V1h6v5H7.500M1 3.500h6v5.500H1z" fill="none" stroke="#444" /></IconSvg></MdiBtn>
          <MdiBtn><IconSvg width="10" height="10" viewBox="0 0 10 10"><path d="M1 1l8 8M9 1l-8 8" stroke="#444" strokeWidth="1.800" /></IconSvg></MdiBtn>
        </MdiBtns>
      </MenuBar>

      <TabBar>
        {tabs.map(([name, w, active]) => (
          <Tab key={name} $w={w} $active={active}>
            <WindowIcon />
            {name}
          </Tab>
        ))}
      </TabBar>

      <Toolbars>
        <ToolRow $h={40}>
          <Gripper $w={10} />
          {renderTools(toolsOne, 8.5, 12)}
        </ToolRow>
        <ToolRow $h={41}>
          <Gripper $w={11} />
          <FontCombo>
            <IconSvg width="14" height="16" viewBox="0 0 14 16">
              <text x="1" y="11" fontFamily="Liberation Serif" fontWeight="700" fontSize="11" fill="#999">T</text>
              <text x="5" y="15" fontFamily="Liberation Serif" fontWeight="700" fontSize="12" fill="#222">T</text>
            </IconSvg>
            <FontName>Arial</FontName>
            <ComboDrop><ScrollChevron dir="down" /></ComboDrop>
          </FontCombo>
          <Sep $w={8} />
          <SizeBox>
            10
            <Spinner>
              <IconSvg width="37" height="37" viewBox="0 0 37 37">
                <rect width="37" height="37" fill="#ece9d8" />
                <path d="M0 37L37 0" stroke="#222" />
                <path d="M8 14V6M5.500 9L8 5l2.500 4M28 23v8M25.500 28l2.500 4 2.500-4" fill="none" stroke="#111" strokeWidth="1.300" />
              </IconSvg>
            </Spinner>
          </SizeBox>
          <StyleBtn $on>B</StyleBtn>
          <StyleBtn>I</StyleBtn>
          <StyleBtn $under>U</StyleBtn>
          {renderTools(toolsTwo, 8, 13)}
        </ToolRow>
      </Toolbars>

      <FormulaBar>
        <CellRef>G8</CellRef>
        <FormulaInput>13.5570160390609</FormulaInput>
      </FormulaBar>

      <Workspace>
        <Sheet>
          <GridRow $h={17}>
            <Corner />
            {columns.map(c => <ColHead key={c}>{c}</ColHead>)}
          </GridRow>
          {rowNumbers.map((n, r) => (
            <GridRow key={n} $h={17}>
              <RowHead>{n}</RowHead>
              {columns.map((c, ci) => {
                const inSel = ci >= 6 && ci <= 8 && r <= 2 && !(ci === 6 && r === 0);
                const v = values[r] ? values[r][ci] : undefined;
                return (
                  <Cell key={c} $sel={inSel} $color={cellColor(ci, inSel)}>
                    {v !== undefined && <CellText>{v}</CellText>}
                  </Cell>
                );
              })}
              <RowFill />
            </GridRow>
          ))}

          <RangeBox $x={43} $y={17} $w={257} $h={52} $c="#f00000" $double />
          <RangeBox $x={169} $y={34} $w={259} $h={52} $c="#ff00ff" />
          <RangeBox $x={233} $y={51} $w={323} $h={52} $c="#3070f0" $b="3px double" />
          <RangeBox $x={427} $y={51} $w={129} $h={18} $c="#e08800" $b="1px solid" />
          <RangeEdge />
          <RangeBox $x={427} $y={17} $w={193} $h={52} $c="#333" />
          <FillHandle />

          <ChartPanel>
            <Chart3D />
            <Legend>
              {legend.map(([name, c]) => (
                <LegendRow key={name}>
                  <Swatch $c={c} />
                  {name}
                </LegendRow>
              ))}
            </Legend>
            <ChartTitle>Lottery Numbers</ChartTitle>
            <ChartFoot>Deviation</ChartFoot>
          </ChartPanel>

          <ContextMenu>
            {menuRows.map((m, i) => (m.divider ? <MenuDivider key={i} /> : (
              <MenuRow key={i} $hot={m.hot}>
                <MenuIconCell $hot={m.hot}>{m.icon && miniIcons[m.icon]}</MenuIconCell>
                <MenuLabel>{m.label}</MenuLabel>
                {m.key && <MenuKey>{m.key}</MenuKey>}
                {m.sub && <SubArrow />}
              </MenuRow>
            )))}
          </ContextMenu>
        </Sheet>
        <VScroll>
          <ScrollBtn $w={13} $h={16}><ScrollChevron dir="up" /></ScrollBtn>
          <ScrollBtn $w={13} $h={16} $t={99}>
            <IconSvg width="9" height="9" viewBox="0 0 9 9"><path d="M1 2h7M1 4.500h7M1 7h7" stroke="#7a96d0" /></IconSvg>
          </ScrollBtn>
          <ScrollBtn $w={13} $h={13} $auto><ScrollChevron dir="down" /></ScrollBtn>
        </VScroll>
      </Workspace>

      <BottomStrip>
        <SheetNav>
          <ScrollBtn $w={15} $h={15}><ScrollChevron dir="left" /></ScrollBtn>
          <ScrollBtn $w={15} $h={15}><ScrollChevron dir="right" /></ScrollBtn>
        </SheetNav>
        <SheetTab>Sheet1</SheetTab>
        <HScroll>
          <ScrollBtn $w={16} $h={15}><ScrollChevron dir="left" /></ScrollBtn>
          <ScrollBtn $w={16} $h={15}>
            <IconSvg width="9" height="9" viewBox="0 0 9 9"><path d="M2 1v7M4.500 1v7M7 1v7" stroke="#7a96d0" /></IconSvg>
          </ScrollBtn>
          <ScrollBtn $w={13} $h={15} $end><ScrollChevron dir="right" /></ScrollBtn>
        </HScroll>
      </BottomStrip>

      <StatusBar>
        <Pane $pad={23}>Row:   8   Col:   7</Pane>
        <Pane />
        <Pane>NUM</Pane>
        <Pane>CAPS</Pane>
        <Pane />
        <Pane>INSERT</Pane>
        <Pane>7 Document(s) Open</Pane>
        <Pane>R: 13.494 mm   C: 50.853 mm</Pane>
        <Pane>
          <Watermark>GEARDOWNLOAD.COM</Watermark>
          <PaneText>R: 0.531"   C: 2.002"</PaneText>
        </Pane>
        <Pane>Active Selection: G8:I10</Pane>
        <Pane>Rows: 3  Cols: 3  Cells: 9</Pane>
        <Pane $pad={13}>A Number.</Pane>
      </StatusBar>
    </Win>
  );
}
